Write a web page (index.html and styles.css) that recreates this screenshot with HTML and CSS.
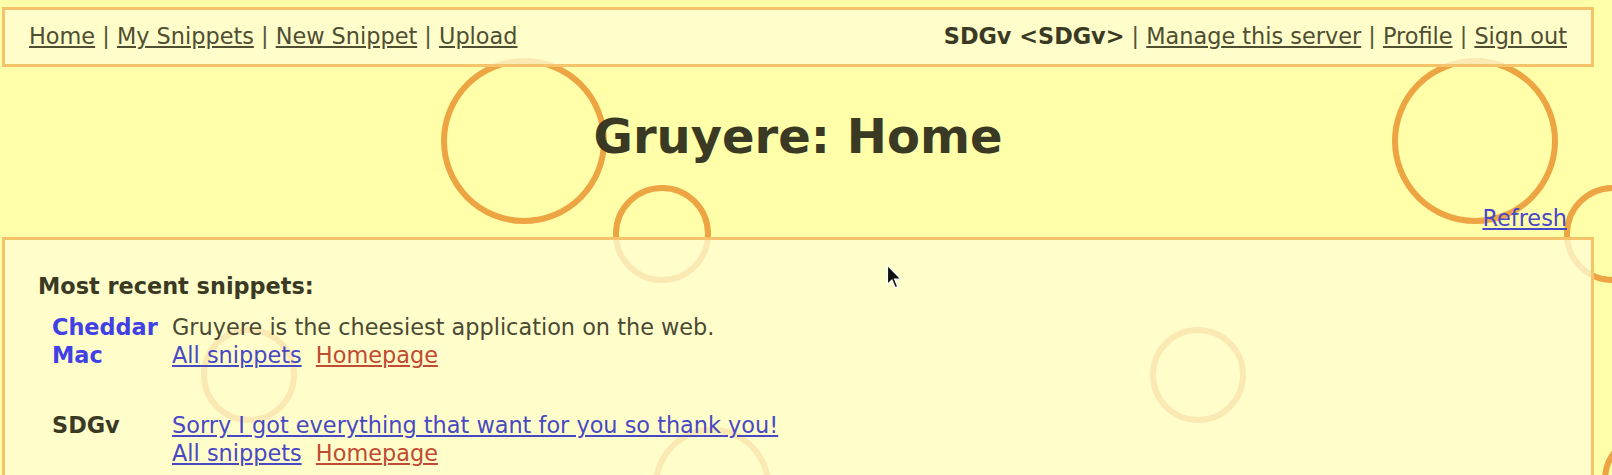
FILE: index.html
```html
<!DOCTYPE html>
<html>
<head>
<meta charset="utf-8">
<title>Gruyere: Home</title>
<link rel="stylesheet" href="styles.css">
</head>
<body>
<svg class="holes" width="1612" height="475" viewBox="0 0 1612 475" aria-hidden="true">
  <g fill="none" stroke="#eda443" stroke-width="6">
    <circle cx="524" cy="141" r="80"/>
    <circle cx="662" cy="234" r="46"/>
    <circle cx="1475" cy="141" r="80"/>
    <circle cx="1613" cy="234" r="46"/>
    <circle cx="249" cy="375" r="45"/>
    <circle cx="1198" cy="375" r="45"/>
    <circle cx="712" cy="486" r="56"/>
    <circle cx="1650" cy="480" r="45"/>
  </g>
</svg>
<div class="page">
  <div class="menubar">
    <div class="menu-left">
      <a href="#">Home</a> | <a href="#">My Snippets</a> | <a href="#">New Snippet</a> | <a href="#">Upload</a>
    </div>
    <div class="menu-right">
      <span class="who">SDGv &lt;SDGv&gt;</span> | <a href="#">Manage this server</a> | <a href="#">Profile</a> | <a href="#">Sign out</a>
    </div>
  </div>
  <h2 class="title">Gruyere: Home</h2>
  <div class="refresh-row"><a class="refresh" href="#">Refresh</a></div>
  <div class="content">
    <div class="heading">Most recent snippets:</div>
    <div class="snippets">
      <div class="entry">
        <a class="user user-link" href="#">Cheddar<br>Mac</a>
        <div class="snippet">
          <div>Gruyere is the cheesiest application on the web.</div>
          <div><a class="all" href="#">All snippets</a>&nbsp; <a class="home" href="#">Homepage</a></div>
        </div>
      </div>
      <div class="entry">
        <span class="user">SDGv</span>
        <div class="snippet">
          <div><a class="all" href="#">Sorry I got everything that want for you so thank you!</a></div>
          <div><a class="all" href="#">All snippets</a>&nbsp; <a class="home" href="#">Homepage</a></div>
        </div>
      </div>
    </div>
  </div>
</div>
<svg class="cursor" width="17" height="27" viewBox="0 0 13 21" aria-hidden="true">
  <path d="M1 1 L1 16 L4.5 12.5 L7 18.5 L9 17.6 L6.6 11.8 L11.5 11.8 Z" fill="#111" stroke="#fff" stroke-width="1"/>
</svg>
</body>
</html>
```
FILE: styles.css
```css
html, body {
  margin: 0;
  padding: 0;
}
body {
  background: #ffffaa;
  font-family: "DejaVu Sans", sans-serif;
  font-size: 22.4px;
  color: #3a3a24;
  position: relative;
  height: 475px;
  overflow: hidden;
}
.holes {
  position: absolute;
  left: 0;
  top: 0;
  z-index: 0;
}
.page {
  position: relative;
  z-index: 1;
  padding: 7px 18px 0 2px;
}
.menubar {
  display: flex;
  justify-content: space-between;
  border: 3px solid #f5c46a;
  background: rgba(255, 253, 212, 0.78);
  padding: 13px 24px 15px 24px;
  line-height: 26px;
  color: #55553b;
}
.menubar a {
  color: #4e4e32;
}
.who {
  font-weight: bold;
  color: #3a3a24;
}
.title {
  margin: 41px 0 0 0;
  text-align: center;
  font-size: 48px;
  line-height: 56px;
  font-weight: bold;
  color: #3a3a24;
}
.refresh-row {
  display: flex;
  justify-content: flex-end;
  margin-top: 41px;
  padding-right: 27px;
  line-height: 26px;
}
.refresh {
  color: #4848c8;
}
.content {
  margin-top: 6px;
  border: 3px solid #f5c46a;
  border-bottom: none;
  background: rgba(255, 253, 212, 0.78);
  padding: 32px 24px 60px 33px;
  line-height: 28px;
  color: #4a4a32;
}
.heading {
  font-weight: bold;
  color: #3a3a24;
}
.snippets {
  display: flex;
  flex-direction: column;
  gap: 42px;
  margin-top: 13px;
  padding-left: 14px;
}
.entry {
  display: grid;
  grid-template-columns: 120px auto;
}
.user {
  font-weight: bold;
  color: #3a3a24;
}
.user-link {
  color: #4040e6;
  text-decoration: none;
  justify-self: start;
}
.snippet a.all {
  color: #4848c4;
}
.snippet a.home {
  color: #c04a32;
}
.cursor {
  position: absolute;
  left: 886px;
  top: 264px;
  z-index: 2;
}
```
